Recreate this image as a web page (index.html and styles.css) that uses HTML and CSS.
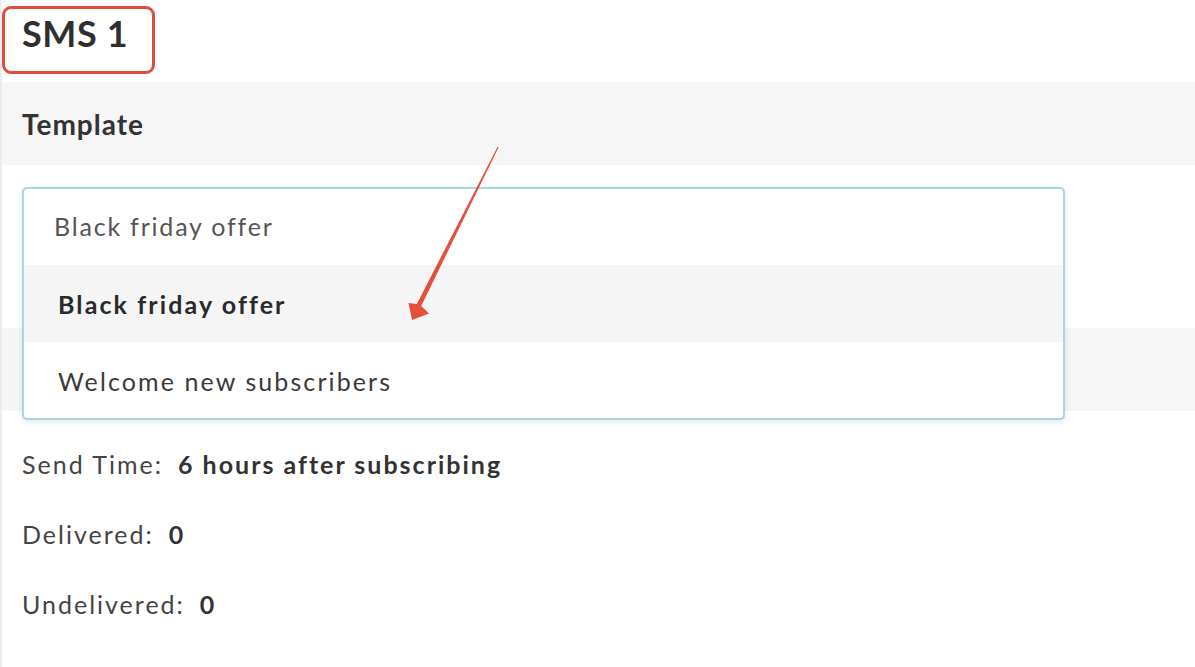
FILE: index.html
```html
<!DOCTYPE html>
<html lang="en">
<head>
<meta charset="utf-8">
<title>SMS 1</title>
<link rel="stylesheet" href="styles.css">
</head>
<body>
<main class="panel">
  <header class="title-row">
    <h1 class="title">SMS 1</h1>
  </header>
  <section class="band"><h2 class="band-label">Template</h2></section>
  <div class="field">
    <div class="combo">
      <div class="combo-input">Black friday offer</div>
      <ul class="combo-menu">
        <li class="option option-active">Black friday offer</li>
        <li class="option">Welcome new subscribers</li>
      </ul>
    </div>
  </div>
  <section class="band band-empty"></section>
  <div class="stats">
    <div class="stat"><span class="stat-label">Send Time:</span><span class="stat-value">6 hours after subscribing</span></div>
    <div class="stat"><span class="stat-label">Delivered:</span><span class="stat-value">0</span></div>
    <div class="stat"><span class="stat-label">Undelivered:</span><span class="stat-value">0</span></div>
  </div>
  <svg class="arrow" width="1195" height="667" viewBox="0 0 1195 667" aria-hidden="true">
    <polygon points="498.6,147.3 421.2,306.1 429,313.5 412,320 408.5,303 416.8,303.9 497.6,146.8" fill="#e4503c"/>
  </svg>
</main>
</body>
</html>
```
FILE: styles.css
```css
* { box-sizing: border-box; }
html, body { margin: 0; padding: 0; background: #fff; }
body {
  font-family: Lato, "Open Sans", "Liberation Sans", sans-serif;
  color: #333;
  width: 1195px;
  height: 667px;
  overflow: hidden;
}
.panel {
  position: relative;
  border-left: 2px solid #ececec;
  height: 667px;
}
.title-row {
  height: 82px;
  padding-top: 6px;
}
.title {
  display: inline-block;
  margin: 0;
  width: 153px;
  height: 68px;
  border: 3px solid #e04d3a;
  border-radius: 9px;
  padding: 4px 0 0 17px;
  font-size: 36px;
  font-weight: 700;
  letter-spacing: 0.6px;
  line-height: 40px;
  color: #2f2f2f;
}
.band {
  background: #f6f6f6;
  height: 83px;
  display: flex;
  align-items: center;
  padding-left: 20px;
}
.band-label {
  margin: 0;
  font-size: 28px;
  font-weight: 700;
  letter-spacing: 1px;
  color: #333;
}
.field {
  position: relative;
  height: 163px;
  padding: 22px 0 0 20px;
}
.combo {
  position: absolute;
  top: 22px;
  left: 20px;
  width: 1043px;
  height: 233px;
  border: 2px solid #a9d5e6;
  border-radius: 5px;
  background: #fff;
  box-shadow: 0 2px 6px rgba(120, 160, 180, 0.25);
  z-index: 2;
}
.combo-input {
  height: 76px;
  display: flex;
  align-items: center;
  padding-left: 30px;
  padding-bottom: 2px;
  font-size: 25px;
  letter-spacing: 1.8px;
  color: #555;
}
.combo-menu {
  list-style: none;
  margin: 0;
  padding: 0;
}
.option {
  height: 77px;
  display: flex;
  align-items: center;
  padding-left: 34px;
  font-size: 25px;
  letter-spacing: 2.1px;
  color: #3a3a3a;
}
.option-active {
  background: #f5f5f5;
  font-weight: 700;
  color: #2a2a2a;
}
.stats {
  padding: 18px 0 0 20px;
}
.stat {
  height: 70px;
  display: flex;
  align-items: center;
  font-size: 25px;
  letter-spacing: 2px;
}
.stat-label { color: #444; }
.stat-value {
  font-weight: 700;
  margin-left: 15px;
  color: #333;
}
.arrow {
  position: absolute;
  top: 0;
  left: -2px;
  z-index: 5;
  pointer-events: none;
}
```
